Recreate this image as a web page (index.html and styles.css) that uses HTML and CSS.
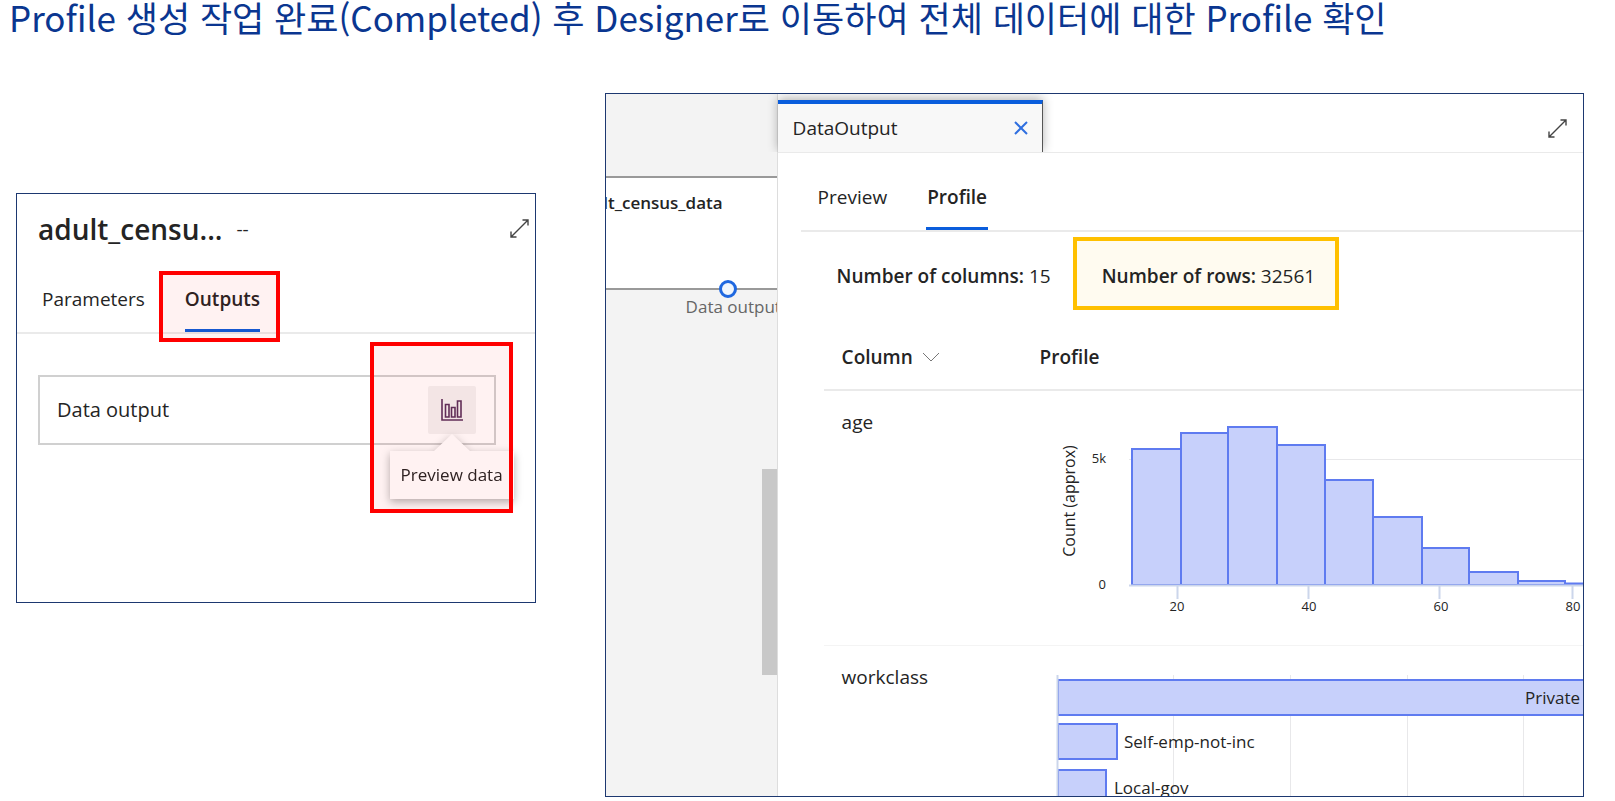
FILE: index.html
```
<!DOCTYPE html>
<html lang="ko">
<head>
    <meta charset="UTF-8">
    <meta name="viewport" content="width=device-width, initial-scale=1.0">
    <title>Profile 확인</title>
    <link rel="stylesheet" href="styles.css">
</head>
<body>
    <h1 class="page-title">Profile 생성 작업 완료(Completed) 후 Designer로 이동하여 전체 데이터에 대한 Profile 확인</h1>

    <main class="shots">
        <!-- Module panel -->
        <section class="card module">
            <header class="module-header">
                <h2 class="module-title">adult_censu...</h2>
                <span class="module-status">--</span>
                <button class="icon-btn" aria-label="Expand">
                    <svg width="20" height="20" viewBox="0 0 20 20" fill="none" stroke="currentColor" stroke-width="1.400">
                        <path d="M1 18 18 1M12.500 1H18v5.500M1 12.500V18h5.500"/>
                    </svg>
                </button>
            </header>

            <nav class="tabs module-tabs">
                <button class="tab">Parameters</button>
                <button class="tab active marked">Outputs</button>
            </nav>

            <div class="output-row">
                <span>Data output</span>
                <div class="preview">
                    <button class="preview-btn" aria-label="Preview data">
                        <svg width="22" height="22" viewBox="0 0 22 22" fill="none" stroke="currentColor" stroke-width="1.600">
                            <path d="M1 0v21h21"/>
                            <path d="M4.500 5.500h3.500v12.500h-3.500zM10.500 8.500h3.500v9.500h-3.500zM16.500 2h3.500v16h-3.500z"/>
                        </svg>
                    </button>
                    <div class="tooltip" role="tooltip">Preview data</div>
                    <div class="mark-box"></div>
                </div>
            </div>
        </section>

        <!-- Designer with the profile panel open -->
        <section class="card designer">
            <div class="canvas">
                <div class="node">
                    <span class="node-name">adult_census_data</span>
                    <span class="node-port"></span>
                </div>
                <div class="port-label">Data output</div>
                <div class="scroll-thumb"></div>
            </div>

            <div class="panel">
                <header class="panel-header">
                    <div class="panel-tab">
                        <span>DataOutput</span>
                        <button class="icon-btn close" aria-label="Close">
                            <svg width="14" height="14" viewBox="0 0 14 14" fill="none" stroke="currentColor" stroke-width="2">
                                <path d="M1 1l12 12M13 1 1 13"/>
                            </svg>
                        </button>
                    </div>
                    <button class="icon-btn" aria-label="Expand">
                        <svg width="20" height="20" viewBox="0 0 20 20" fill="none" stroke="currentColor" stroke-width="1.400">
                            <path d="M1 18 18 1M12.500 1H18v5.500M1 12.500V18h5.500"/>
                        </svg>
                    </button>
                </header>

                <nav class="tabs panel-tabs">
                    <button class="tab">Preview</button>
                    <button class="tab active">Profile</button>
                </nav>

                <div class="counts">
                    <p><strong>Number of columns:</strong> 15</p>
                    <p class="rows"><strong>Number of rows:</strong> 32561</p>
                </div>

                <table class="profile-table">
                    <thead>
                        <tr>
                            <th class="col-name">Column
                                <svg width="18" height="12" viewBox="0 0 18 12" fill="none" stroke="#777">
                                    <path d="M1 1l8 8 8-8"/>
                                </svg>
                            </th>
                            <th>Profile</th>
                        </tr>
                    </thead>
                    <tbody>
                        <tr>
                            <td class="col-name">age</td>
                            <td class="col-chart">
                                <svg class="chart" width="544" height="254" viewBox="1040 391 544 254">
                                    <path class="grid" d="M1129 459.500H1584"/>
                                    <g class="bar">
                                        <path d="M1132 585V449H1181V585z"/>
                                        <path d="M1181 585V433H1228V585z"/>
                                        <path d="M1228 585V427H1277V585z"/>
                                        <path d="M1277 585V445H1325V585z"/>
                                        <path d="M1325 585V480H1373V585z"/>
                                        <path d="M1373 585V517H1422V585z"/>
                                        <path d="M1422 585V548H1469V585z"/>
                                        <path d="M1469 585V572H1518V585z"/>
                                        <path d="M1518 585V581H1565V585z"/>
                                        <path d="M1565 585V583.500H1590V585z"/>
                                    </g>
                                    <path class="axis" d="M1129 585.500H1584M1177.500 586v13M1308.500 586v13M1439.500 586v13M1572.500 586v13"/>
                                    <g class="tick">
                                        <text x="1106" y="463" text-anchor="end">5k</text>
                                        <text x="1106" y="589" text-anchor="end">0</text>
                                        <g text-anchor="middle">
                                            <text x="1177" y="611">20</text>
                                            <text x="1309" y="611">40</text>
                                            <text x="1441" y="611">60</text>
                                            <text x="1573" y="611">80</text>
                                        </g>
                                    </g>
                                    <text class="axis-title" transform="translate(1075 501) rotate(-90)" text-anchor="middle">Count (approx)</text>
                                </svg>
                            </td>
                        </tr>
                        <tr>
                            <td class="col-name">workclass</td>
                            <td class="col-chart">
                                <svg class="chart" width="544" height="150" viewBox="1040 646 544 150">
                                    <path class="grid" d="M1173.500 675v130M1290.500 675v130M1407.500 675v130M1523.500 675v130"/>
                                    <g class="bar">
                                        <path d="M1058 680H1600V715H1058z"/>
                                        <path d="M1058 724H1117V759H1058z"/>
                                        <path d="M1058 770H1106V805H1058z"/>
                                    </g>
                                    <path class="axis" d="M1057.500 675v130"/>
                                    <g class="bar-label">
                                        <text x="1525" y="704">Private</text>
                                        <text x="1124" y="748">Self-emp-not-inc</text>
                                        <text x="1114" y="794">Local-gov</text>
                                    </g>
                                </svg>
                            </td>
                        </tr>
                    </tbody>
                </table>
            </div>
        </section>
    </main>
</body>
</html>
```
FILE: styles.css
```
:root {
    --color-title: #0a3690;
    --color-frame: #1d3870;
    --color-text: #242424;
    --color-accent: #0a5ddc;
    --color-line: #eaeaea;
    --color-bar: #5f7bf0;
    --color-bar-fill: #c7d0fb;
    --color-mark: #ff0000;
}

* {
    box-sizing: border-box;
    margin: 0;
    padding: 0;
}

body {
    font-family: "Open Sans", "Noto Sans CJK KR", sans-serif;
    font-size: 19px;
    line-height: 26px;
    color: var(--color-text);
    background-color: #fff;
    overflow: hidden;
}

button {
    font: inherit;
    color: inherit;
    background: none;
    border: none;
    cursor: pointer;
}

svg {
    display: block;
}

.page-title {
    height: 93px;
    padding-left: 9px;
    font-family: "Noto Sans CJK KR", sans-serif;
    font-size: 35px;
    font-weight: 400;
    line-height: 34px;
    white-space: nowrap;
    color: var(--color-title);
}

.shots {
    display: flex;
    align-items: flex-start;
    gap: 69px;
    padding: 0 31px 0 16px;
}

.card {
    border: 1px solid var(--color-frame);
}

.tabs {
    display: flex;
    border-bottom: 2px solid var(--color-line);
}

.tab.active {
    font-weight: 600;
    box-shadow: inset 0 -3px var(--color-accent);
}

.icon-btn {
    display: flex;
    color: #444;
}

/* Module panel */
.module {
    flex: 519;
    min-width: 0;
    min-height: 410px;
    margin-top: 100px;
}

.module-header {
    display: flex;
    align-items: center;
    padding: 16px 5px 0 21px;
}

.module-title {
    font-size: 28px;
    font-weight: 600;
    line-height: 38px;
}

.module-status {
    margin-left: 14px;
}

.module-header .icon-btn {
    margin-left: auto;
}

.module-tabs {
    gap: 40px;
    height: 86px;
    padding: 25px 0 0 25px;
}

.module-tabs .tab {
    padding-bottom: 8px;
    position: relative;
}

.marked::after {
    content: "";
    position: absolute;
    inset: -2px -20px -10px -26px;
    border: 4px solid var(--color-mark);
    background-color: rgba(255, 0, 0, 0.05);
}

.output-row {
    display: flex;
    align-items: center;
    justify-content: space-between;
    height: 70px;
    margin: 41px 39px 0 21px;
    padding: 0 18px 0 17px;
    font-size: 20px;
    border: 2px solid #d0d0d0;
}

.preview {
    position: relative;
}

.preview-btn {
    display: flex;
    align-items: center;
    justify-content: center;
    width: 48px;
    height: 48px;
    border-radius: 2px;
    background-color: #f3f2f2;
    color: #59305c;
}

.tooltip {
    position: absolute;
    top: 65px;
    left: -38px;
    width: 124px;
    padding: 12px 0;
    font-size: 17px;
    line-height: 24px;
    text-align: center;
    white-space: nowrap;
    background-color: #fff;
    filter: drop-shadow(0 3px 4px rgba(0, 0, 0, 0.3));
}

.tooltip::before {
    content: "";
    position: absolute;
    top: -17px;
    left: 44px;
    border: solid transparent;
    border-width: 0 18px 17px;
    border-bottom-color: #fff;
}

.mark-box {
    position: absolute;
    top: -44px;
    left: -58px;
    width: 143px;
    height: 171px;
    border: 4px solid var(--color-mark);
    background-color: rgba(255, 0, 0, 0.05);
}

/* Designer */
.designer {
    flex: 980;
    min-width: 0;
    display: flex;
    overflow: hidden;
}

.canvas {
    position: relative;
    width: 171px;
    flex: none;
    padding-top: 82px;
    overflow: hidden;
    background-color: #f3f3f3;
}

.node {
    position: relative;
    height: 114px;
    padding-top: 13px;
    border: solid #999;
    border-width: 2px 0;
    background-color: #fff;
}

.node-name {
    display: flex;
    justify-content: flex-end;
    margin-right: 54px;
    font-size: 17px;
    font-weight: 600;
    line-height: 24px;
}

.node-port {
    position: absolute;
    bottom: -10px;
    left: 113px;
    width: 18px;
    height: 18px;
    border: 3px solid #1f68e0;
    border-radius: 50%;
    background-color: #f0f6fd;
}

.port-label {
    padding: 5px 0 0 80px;
    font-size: 17px;
    line-height: 24px;
    white-space: nowrap;
    color: #666;
}

.scroll-thumb {
    position: absolute;
    right: 0;
    top: 375px;
    width: 15px;
    height: 206px;
    background-color: #c8c8c8;
}

.panel {
    flex: 1;
    min-width: 0;
    border-left: 1px solid #ddd;
    background-color: #fff;
}

.panel-header {
    display: flex;
    align-items: center;
    justify-content: space-between;
    height: 59px;
    padding: 6px 15px 0 0;
    border-bottom: 1px solid var(--color-line);
}

.panel-header > .icon-btn {
    padding-top: 6px;
}

.panel-tab {
    display: flex;
    align-items: center;
    justify-content: space-between;
    width: 265px;
    height: 100%;
    padding: 0 14px 0 15px;
    border-top: 4px solid var(--color-accent);
    border-right: 1px solid #555;
    background-color: #f8f8f8;
    box-shadow: 0 -2px 10px rgba(0, 0, 0, 0.3);
    clip-path: inset(-12px -12px 0);
}

.close {
    color: #2f6fe0;
}

.panel-tabs {
    gap: 38px;
    height: 79px;
    margin-left: 23px;
    padding: 30px 0 0 16px;
}

.panel-tabs .tab {
    padding: 0 1px 19px;
}

.counts {
    display: flex;
    align-items: center;
    gap: 22px;
    padding: 5px 0 0 59px;
}

.counts strong {
    font-weight: 600;
}

.counts p {
    padding: 22px 0 17px;
    white-space: nowrap;
}

.counts .rows {
    padding: 22px 20px 17px 25px;
    border: 4px solid #ffc000;
    background-color: #fffbf0;
}

.profile-table {
    width: calc(100% - 46px);
    margin-left: 46px;
    border-collapse: collapse;
    table-layout: fixed;
}

.profile-table th {
    height: 80px;
    padding-top: 14px;
    font-weight: 600;
    text-align: left;
    border-bottom: 2px solid var(--color-line);
}

.profile-table th svg {
    display: inline-block;
    margin-left: 4px;
}

.profile-table td {
    vertical-align: top;
    border-bottom: 1px solid #f4f4f4;
}

.profile-table tr:last-child td {
    border-bottom: none;
}

.profile-table .col-name {
    width: 216px;
    padding-left: 18px;
}

.profile-table td.col-name {
    padding-top: 18px;
}

.col-chart {
    overflow: hidden;
}

.chart text {
    fill: var(--color-text);
}

.chart .tick {
    font-size: 13px;
}

.chart .axis-title {
    font-size: 16px;
}

.chart .bar-label {
    font-size: 17px;
}

.chart .bar {
    fill: var(--color-bar-fill);
    stroke: var(--color-bar);
    stroke-width: 2;
}

.chart .grid {
    stroke: #e8e8ea;
}

.chart .axis {
    stroke: #ccd6eb;
    stroke-width: 2;
}
```
